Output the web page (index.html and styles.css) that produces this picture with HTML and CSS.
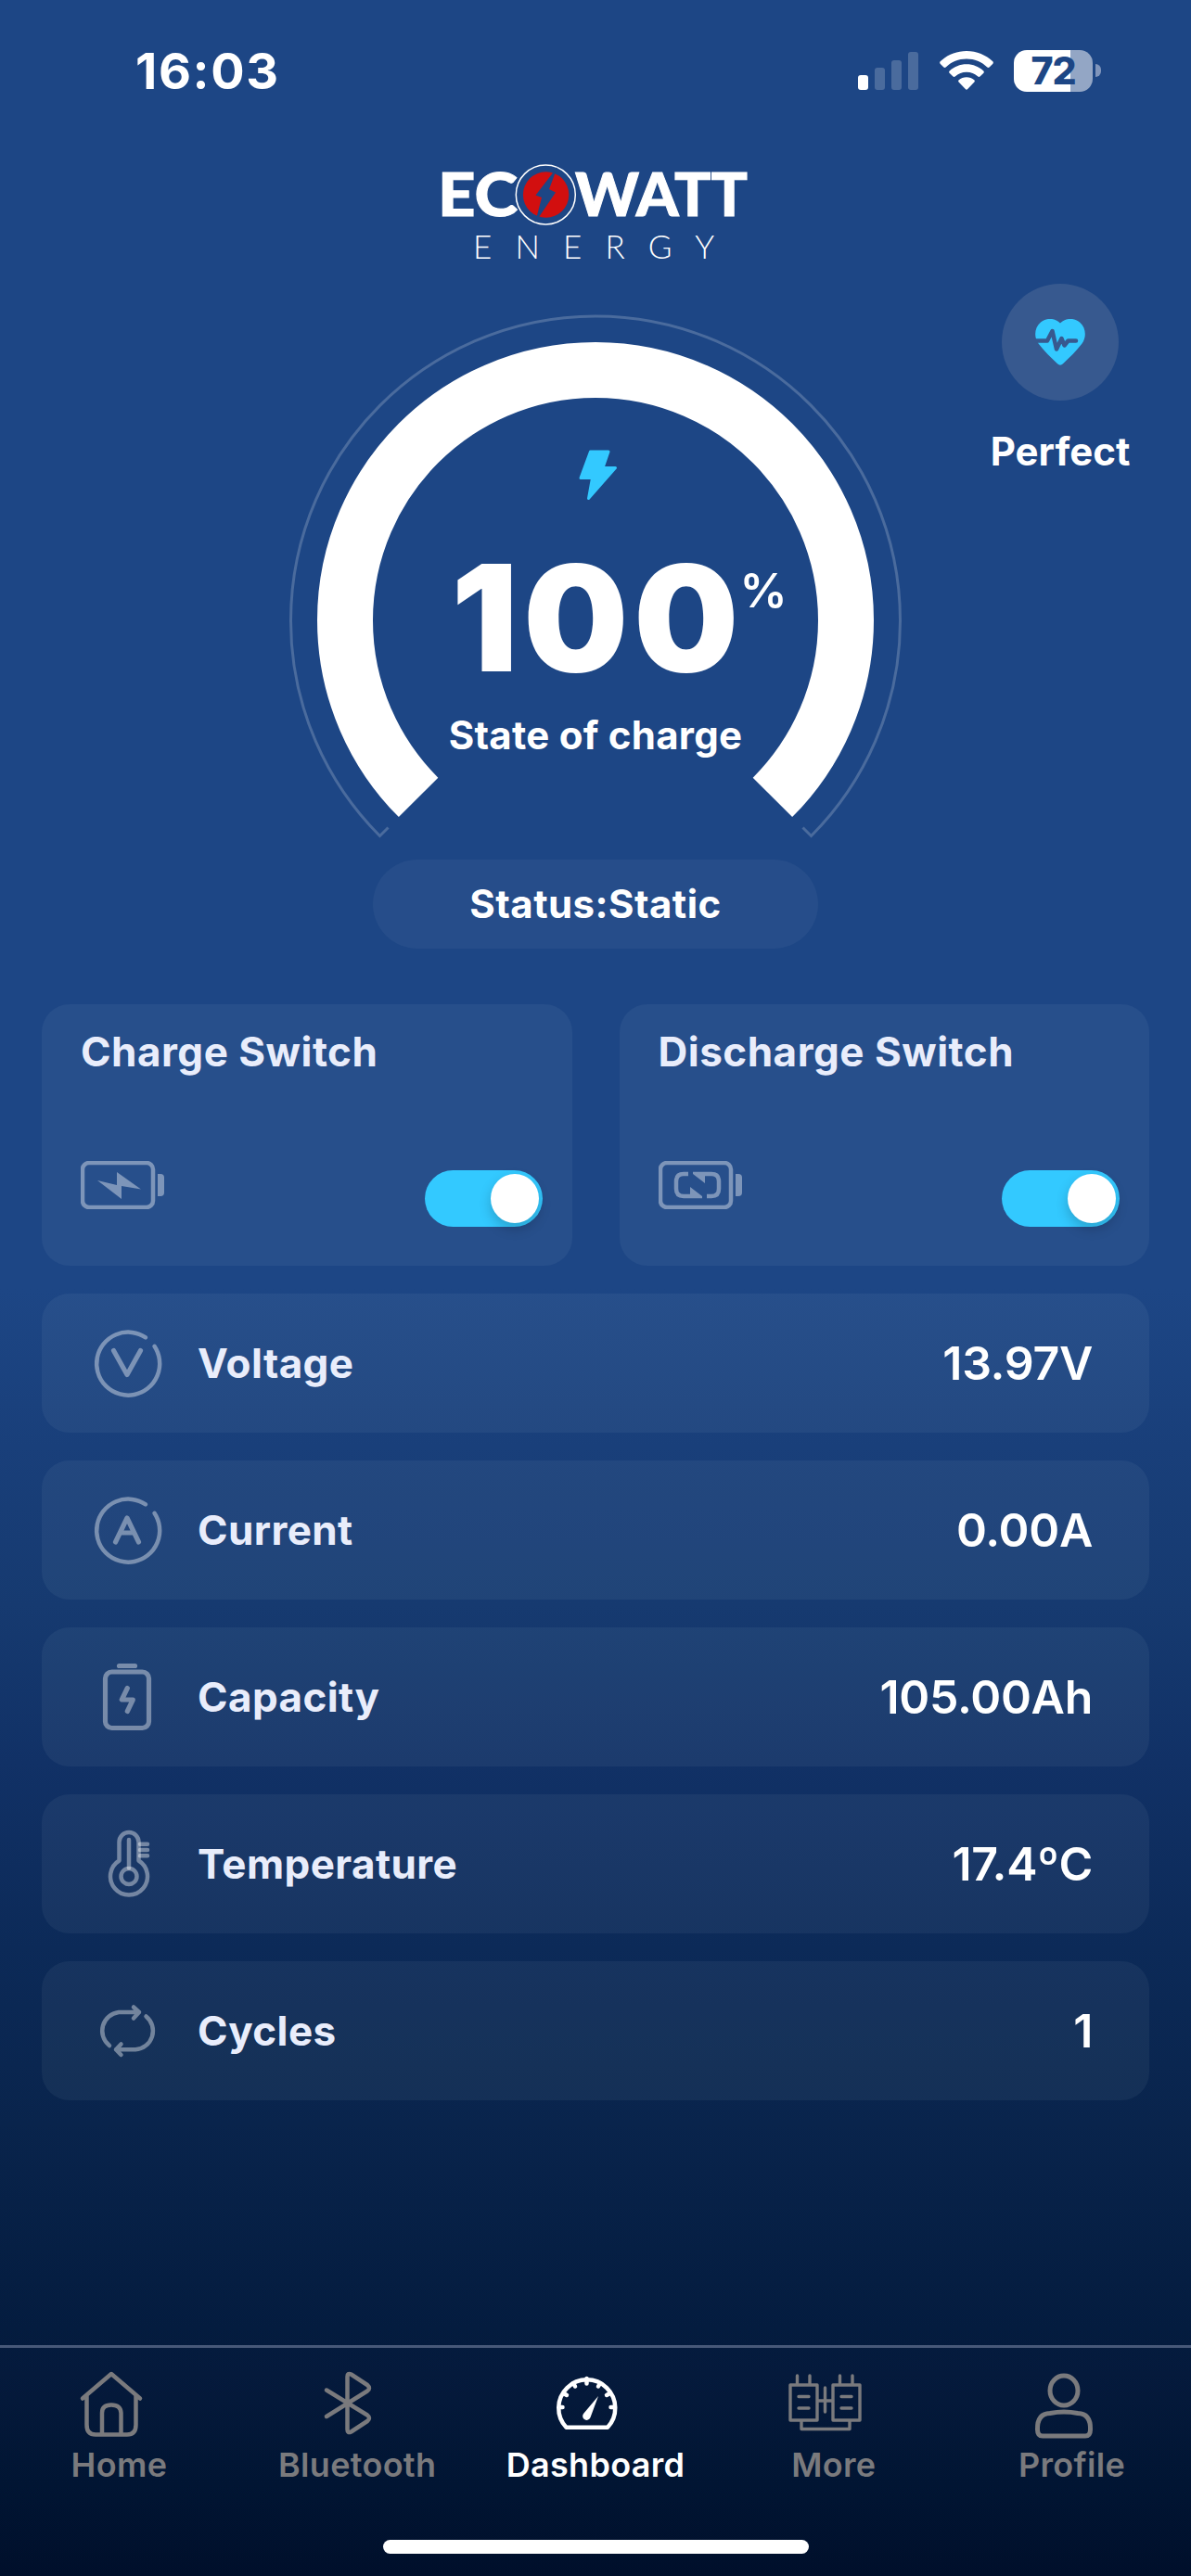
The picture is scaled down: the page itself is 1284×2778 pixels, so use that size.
FILE: index.html
```html
<!DOCTYPE html>
<html lang="en">
<head>
  <meta charset="UTF-8" />
  <meta name="viewport" content="width=device-width, initial-scale=1.0"/>
  <title>Ecowatt Energy - Dashboard</title>
  <link rel="stylesheet" href="styles.css">
</head>
<body>

  <!-- Status bar -->
  <header class="status-bar">
    <span class="time">16:03</span>
    <div class="status-icons">
      <svg class="signal" width="66" height="42" viewBox="0 0 66 42" fill="#fff">
        <rect x="0" y="26" width="11" height="16" rx="3"/>
        <g opacity="0.2">
          <rect x="18" y="18" width="11" height="24" rx="3"/>
          <rect x="36" y="10" width="11" height="32" rx="3"/>
          <rect x="54" y="1" width="11" height="41" rx="3"/>
        </g>
      </svg>
      <svg class="wifi" width="58" height="42" viewBox="0 0 58 42" fill="#fff">
        <path d="M29 0C40 0 50 4.300 57.300 11.300C58 12 58 13 57.400 13.700L53.600 17.500C53 18.100 52 18.100 51.300 17.500C45.300 11.800 37.500 8.600 29 8.600S12.700 11.800 6.700 17.500C6 18.100 5 18.100 4.400 17.500L0.600 13.700C0 13 0 12 0.700 11.300C8 4.300 18 0 29 0Z"/>
        <path d="M29 14.300C36 14.300 42.500 17 47.300 21.400C48 22 48 23 47.400 23.700L43.500 27.500C42.900 28.100 42 28.100 41.300 27.600C38 24.600 33.700 22.800 29 22.800S20 24.600 16.700 27.600C16 28.100 15.100 28.100 14.500 27.500L10.600 23.700C10 23 10 22 10.700 21.400C15.500 17 22 14.300 29 14.300Z"/>
        <path d="M29 28.200C32.200 28.200 35.100 29.300 37.300 31.200C38 31.800 38 32.800 37.400 33.400L30.200 41.100C29.500 41.800 28.500 41.800 27.800 41.100L20.600 33.400C20 32.800 20 31.800 20.700 31.200C22.900 29.300 25.800 28.200 29 28.200Z"/>
      </svg>
      <div class="battery"><span>72</span></div>
      <i class="battery-tip"></i>
    </div>
  </header>

  <!-- Logo -->
  <svg class="logo" width="340" height="154" viewBox="472 152 340 154">
    <text class="logo-bold" x="472" y="233" textLength="86" lengthAdjust="spacingAndGlyphs">EC</text>
    <text class="logo-bold" x="620" y="233" textLength="186" lengthAdjust="spacingAndGlyphs">WATT</text>
    <circle cx="588.300" cy="210" r="34" fill="#1d4685"/>
    <circle cx="588.300" cy="210" r="32" fill="none" stroke="#fff" stroke-width="1.500"/>
    <circle cx="588.600" cy="210" r="24.700" fill="#d20f0f"/>
    <path d="M601 180L577.500 210.500L584 213L577 240L599 207.500L592 204Z" fill="#1d4685"/>
    <text class="logo-thin" x="510" y="279" textLength="260">ENERGY</text>
  </svg>

  <!-- State of charge gauge -->
  <section class="hero">
    <div class="gauge">
      <svg class="gauge-arc" width="660" height="570" viewBox="-330 -330 660 570" fill="none">
        <path d="M-223.500 223.500L-232.500 232.500A328.500 328.500 0 1 1 232.500 232.500L223.500 223.500" stroke="#fff" stroke-opacity="0.2" stroke-width="3"/>
        <path d="M-190.900 190.900A270 270 0 1 1 190.900 190.900" stroke="#fff" stroke-width="60"/>
      </svg>
      <div class="gauge-text">
        <svg class="bolt" width="42" height="55" viewBox="0 0 42 55">
          <path d="M12.500 2H32L26 19.500H39.500L10.500 52.500L14.500 30.500H2Z" fill="#33c9ff" stroke="#33c9ff" stroke-width="3" stroke-linejoin="round"/>
        </svg>
        <div class="soc">100<sup>%</sup></div>
        <div class="soc-label">State of charge</div>
      </div>
    </div>
    <div class="health">
      <div class="health-icon">
        <svg width="54" height="50" viewBox="0 0 54 50">
          <path d="M27 4.500C33-1.500 42-1.500 48 3.500C55 9.500 55.500 19.500 50.500 26.500C45 34 37 41.500 30 48.300C28 50.200 26 50.200 24 48.300C17 41.500 9 34 3.500 26.500C-1.500 19.500-1 9.500 6 3.500C12-1.500 21-1.500 27 4.500Z" fill="#33c9ff"/>
          <path d="M0 23.500H13L18.500 13L23 32.500L28.500 21L31.500 28.500L35.500 23.500H44" fill="none" stroke="#37598f" stroke-width="4.500" stroke-linejoin="round" stroke-linecap="round"/>
        </svg>
      </div>
      <span>Perfect</span>
    </div>
  </section>

  <div class="status-pill">Status:Static</div>

  <!-- Switches -->
  <section class="switches">
    <div class="card switch-card">
      <h2>Charge Switch</h2>
      <div class="switch-row">
        <svg class="icon" width="90" height="52" viewBox="0 0 90 52">
          <rect x="2" y="2" width="76" height="48" rx="7"/>
          <path class="solid" d="M83 14H86Q90 14 90 18V34Q90 38 86 38H83Z"/>
          <path class="solid" d="M18 21L39 26V12L65 30.500L44 27V41Z"/>
        </svg>
        <div class="toggle"><i></i></div>
      </div>
    </div>
    <div class="card switch-card">
      <h2>Discharge Switch</h2>
      <div class="switch-row">
        <svg class="icon" width="90" height="52" viewBox="0 0 90 52">
          <rect x="2" y="2" width="76" height="48" rx="7"/>
          <path class="solid" d="M83 14H86Q90 14 90 18V34Q90 38 86 38H83Z"/>
          <path class="arrows" d="M32 14H27Q19 14 19 22V30Q19 38 27 38H34M50 14H57Q65 14 65 22V30Q65 38 57 38H52"/>
          <path class="solid" d="M34 28L47 38V40.200H34ZM50 24L37 14V11.800H50Z"/>
        </svg>
        <div class="toggle"><i></i></div>
      </div>
    </div>
  </section>

  <!-- Readings -->
  <section class="readings">
    <div class="card reading">
      <svg class="icon" width="80" height="80" viewBox="0 0 80 80">
        <path d="M59 12.300A34 34 0 1 0 68.500 21.800"/>
        <path class="thick" d="M24.500 26.500L39 52.500L53.500 26.500"/>
      </svg>
      <span class="label">Voltage</span>
      <span class="value">13.97V</span>
    </div>
    <div class="card reading">
      <svg class="icon" width="80" height="80" viewBox="0 0 80 80">
        <path d="M59 12.300A34 34 0 1 0 68.500 21.800"/>
        <path class="thick" d="M26.500 53L39 27L51.500 53M32 43H46"/>
      </svg>
      <span class="label">Current</span>
      <span class="value">0.00A</span>
    </div>
    <div class="card reading">
      <svg class="icon" width="80" height="80" viewBox="0 0 80 80">
        <rect class="thick" x="15.500" y="13" width="47" height="60.500" rx="7"/>
        <path class="thick" d="M30.500 6.500H47.500M39.300 30.500L33.300 43H45.300L39.300 55.500"/>
      </svg>
      <span class="label">Capacity</span>
      <span class="value">105.00Ah</span>
    </div>
    <div class="card reading">
      <svg class="icon" width="80" height="80" viewBox="0 0 80 80">
        <path d="M30.500 36.500V16.500A10.500 10.500 0 0 1 51.500 16.500V36.500A20 20 0 1 1 30.500 36.500Z"/>
        <circle cx="41" cy="53.500" r="8.500"/>
        <path d="M41 14V44.500M53 18.700H61M53 25H61M53 31.300H61"/>
      </svg>
      <span class="label">Temperature</span>
      <span class="value">17.4ºC</span>
    </div>
    <div class="card reading">
      <svg class="icon" width="80" height="80" viewBox="0 0 80 80">
        <path d="M20 56A20.200 20.200 0 0 1 30 20H52M46 14.500L52 20L46 26.500M59.500 24.500A20.200 20.200 0 0 1 48 60.300H27M32.500 54.500L27 60.300L32.500 66"/>
      </svg>
      <span class="label">Cycles</span>
      <span class="value">1</span>
    </div>
  </section>

  <!-- Tab bar -->
  <nav class="tab-bar">
    <a class="tab">
      <svg width="80" height="76" viewBox="0 0 80 76">
        <path d="M9 30.500L40 4L71 30.500M13.500 27.500V59Q13.500 69.500 23 69.500H57Q66.500 69.500 66.500 59V27.500M30 69V46Q30 37.500 40 37.500T50.500 46V69"/>
      </svg>
      <span>Home</span>
    </a>
    <a class="tab">
      <svg width="80" height="76" viewBox="0 0 80 76">
        <path d="M15 21.500L59 48.500Q63 51.500 59 55L41.500 66.500Q37.500 68.500 37.500 64V7Q37.500 2.500 41.500 4.500L59 16Q63 19.500 59 22.500L15 50"/>
      </svg>
      <span>Bluetooth</span>
    </a>
    <a class="tab active">
      <svg width="80" height="76" viewBox="0 0 80 76">
        <path d="M17.500 61.700A30.500 30.500 0 1 1 62 61.700Z"/>
        <path d="M10 40H13.500M14.500 25L18 27M25 14L27 17.500M39.500 9V14.500M54 14L52 17.500M64.500 25L61 27M69 40H65.500"/>
        <path d="M52 28L36 47A4.300 4.300 0 1 0 43.500 51Z" fill="#fff" stroke="none"/>
      </svg>
      <span>Dashboard</span>
    </a>
    <a class="tab">
      <svg class="thin" width="80" height="76" viewBox="0 0 80 76">
        <path d="M2 16H31V54H2ZM48 16H77V54H48ZM9.500 6V15M23 6V15M55.500 6V15M69 6V15M31 33H48M39.500 19V45M14 55V63.500H66V55"/>
        <path d="M11 28.500H22M11 41H22M57 28.500H68M57 41H68"/>
      </svg>
      <span>More</span>
    </a>
    <a class="tab">
      <svg class="bold" width="80" height="76" viewBox="0 0 80 76">
        <ellipse cx="40" cy="22" rx="15" ry="16"/>
        <path d="M11.500 64Q11 47 25 46.500Q40 43.500 55 46.500Q69 47 68.500 64Q68.500 71 63 71H17Q11.500 71 11.500 64Z"/>
      </svg>
      <span>Profile</span>
    </a>
  </nav>
  <div class="home-indicator"></div>

</body>
</html>
```
FILE: styles.css
```css
* {
  box-sizing: border-box;
}

body {
  font-family: Inter, "Liberation Sans", sans-serif;
  background: linear-gradient(to bottom, #1d4685 0, #1d4685 1390px, #193f7a 1560px, #163a70 1730px, #113166 1900px, #0c2a58 2100px, #09244c 2290px, #041c3f 2510px, #051a3c 2560px, #011533 2680px, #000f2b 2778px);
  color: #fff;
  margin: 0;
  height: 2778px;
  display: flex;
  flex-direction: column;
  overflow: hidden;
}

/* Status bar */
.status-bar {
  display: flex;
  justify-content: space-between;
  align-items: center;
  height: 152px;
  padding: 0 97px 0 146px;
}

.time {
  font-size: 54px;
  font-weight: 700;
  letter-spacing: 1.6px;
}

.status-icons {
  display: flex;
  align-items: center;
}

.wifi {
  margin: 0 22px;
}

.battery {
  width: 85px;
  height: 45px;
  border-radius: 14px;
  background: linear-gradient(to right, #fff 61px, #93a6c5 61px);
  color: #1d4685;
  font-size: 41px;
  font-weight: 800;
  letter-spacing: -1px;
  line-height: 45px;
  text-align: center;
}

.battery-tip {
  width: 6px;
  height: 14px;
  margin-left: 3px;
  border-radius: 0 6px 6px 0;
  background: #8095bb;
}

/* Logo */
.logo {
  align-self: center;
  fill: #fff;
}

.logo-bold {
  font-family: Lato, sans-serif;
  font-weight: 900;
  font-size: 64px;
  stroke: #fff;
  stroke-width: 1px;
}

.logo-thin {
  font-family: Lato, sans-serif;
  font-weight: 300;
  font-size: 35px;
}

/* Gauge */
.hero {
  display: grid;
  grid-template-columns: 312px 660px 1fr;
}

.gauge {
  grid-column: 2;
  display: grid;
  margin-top: 33px;
}

.gauge-arc,
.gauge-text {
  grid-area: 1 / 1;
}

.gauge-text {
  display: flex;
  flex-direction: column;
  align-items: center;
  padding-top: 146px;
}

.bolt {
  margin-left: 6px;
}

.soc {
  display: flex;
  margin: 30px 0 0 51px;
  font-size: 159px;
  font-weight: 900;
  line-height: 192px;
  letter-spacing: 6px;
}

.soc sup {
  margin: 38px 0 0 -5px;
  font-size: 51px;
  font-weight: 600;
  line-height: 58px;
  letter-spacing: 0;
}

.soc-label {
  margin-top: 5px;
  font-size: 42px;
  font-weight: 700;
  letter-spacing: 0.25px;
  line-height: 52px;
}

.health {
  display: flex;
  flex-direction: column;
  align-items: center;
  padding-left: 30px;
  font-size: 42px;
  font-weight: 700;
}

.health-icon {
  display: flex;
  align-items: center;
  justify-content: center;
  width: 126px;
  height: 126px;
  margin-bottom: 29px;
  border-radius: 50%;
  background: #37598f;
}

.status-pill {
  align-self: center;
  width: 480px;
  height: 96px;
  margin-top: 18px;
  border-radius: 48px;
  background: rgba(245, 255, 255, 0.045);
  font-size: 42px;
  font-weight: 700;
  letter-spacing: 0.45px;
  line-height: 96px;
  text-align: center;
}

/* Cards */
.card {
  background: rgba(245, 255, 255, 0.05);
  border-radius: 30px;
}

.icon {
  fill: none;
  stroke: rgba(255, 255, 255, 0.4);
  stroke-width: 4.5;
  stroke-linecap: round;
  stroke-linejoin: round;
}

.icon .thick {
  stroke-width: 5.2;
}

.icon .arrows {
  stroke-linecap: butt;
}

.icon .solid {
  fill: rgba(255, 255, 255, 0.4);
  stroke: none;
}

.switches {
  display: grid;
  grid-template-columns: 1fr 1fr;
  gap: 51px;
  margin: 60px 45px 30px;
}

.switch-card {
  height: 282px;
  padding: 24px 32px 0 42px;
}

.switch-card h2 {
  margin: 0;
  font-size: 44px;
  font-weight: 700;
  letter-spacing: 0.5px;
  line-height: 54px;
  color: #e9edfb;
}

.switch-row {
  display: flex;
  justify-content: space-between;
  margin-top: 91px;
}

.toggle {
  display: flex;
  justify-content: flex-end;
  width: 127px;
  height: 61px;
  margin-top: 10px;
  padding: 4px;
  border-radius: 31px;
  background: #33c9ff;
}

.toggle i {
  width: 52px;
  height: 53px;
  border-radius: 50%;
  background: #fff;
  box-shadow: 0 6px 14px rgba(0, 0, 0, 0.2);
}

.readings {
  display: flex;
  flex-direction: column;
  gap: 30px;
  margin: 0 45px;
}

.reading {
  display: flex;
  align-items: center;
  height: 150px;
  padding: 0 61px 0 53px;
}

.label {
  flex: 1;
  margin-left: 35px;
  font-size: 44px;
  font-weight: 700;
  letter-spacing: 0.4px;
  color: #e9edfb;
}

.value {
  font-size: 50px;
  font-weight: 600;
  letter-spacing: -0.3px;
}

/* Tab bar */
.tab-bar {
  display: grid;
  grid-template-columns: repeat(5, 1fr);
  margin-top: auto;
  height: 210px;
  padding-top: 24px;
  border-top: 3px solid #475878;
}

.tab {
  display: flex;
  flex-direction: column;
  align-items: center;
  color: #7a7a7d;
  font-size: 36px;
  font-weight: 600;
  letter-spacing: 0.3px;
}

.tab svg {
  margin-right: 17px;
  margin-bottom: 4px;
  fill: none;
  stroke: #7a7a7d;
  stroke-width: 4.5;
  stroke-linecap: round;
  stroke-linejoin: round;
}

.tab svg.thin {
  stroke-width: 3.4;
}

.tab svg.bold {
  stroke-width: 5;
}

.tab.active {
  color: #fff;
}

.tab.active svg {
  stroke: #fff;
}

.home-indicator {
  align-self: center;
  width: 459px;
  height: 15px;
  margin-bottom: 24px;
  border-radius: 8px;
  background: #fff;
}
```
